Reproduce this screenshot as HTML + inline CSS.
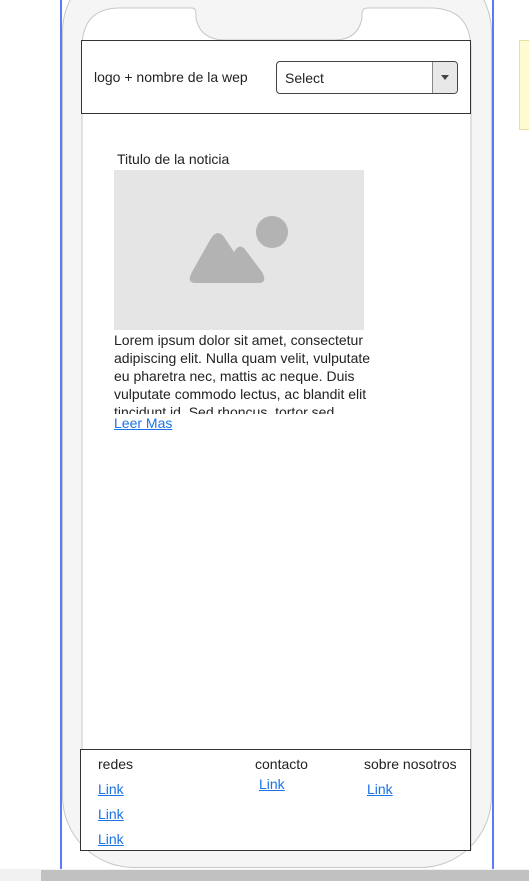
<!DOCTYPE html>
<html><head><style>
*{margin:0;padding:0;box-sizing:border-box}
body{width:529px;height:881px;overflow:hidden;background:#fff;font-family:"Liberation Sans",Arial,sans-serif;position:relative;color:#222}
.a{position:absolute}
a,.lk{color:#1a73e8;text-decoration:underline;font-size:14px}
</style></head><body>
<div class="a" style="left:60px;top:0;width:2px;height:869px;background:#5b7cf0"></div>
<div class="a" style="left:492px;top:0;width:2px;height:869px;background:#5b7cf0"></div>
<div class="a" style="left:62px;top:-40px;width:430px;height:908px;background:#f5f5f5;border:1px solid #c8c8c8;border-radius:72px"></div>
<svg class="a" style="left:0;top:0" width="529" height="881">
<path d="M120 8 H192 Q196 8 196 14 V18 Q200 40 226 40 H334 Q358 40 362 18 V14 Q362 8 368 8 H430 Q471 8 471 50 V850 H82 V48 Q82 8 120 8 Z" fill="#fff" stroke="#c8c8c8" stroke-width="1"/>
<rect x="114" y="170" width="250" height="160" fill="#e5e5e5"/>
<path d="M196 283 Q186 283 192 272 L210 240 Q218 226 226 240 L234 252 Q240 241 247 252 L262 272 Q268 283 258 283 Z" fill="#b3b3b3"/>
<circle cx="272" cy="232" r="16" fill="#b3b3b3"/>
</svg>
<div class="a" style="left:519px;top:40px;width:10px;height:90px;background:#fffbd0;border:1px solid #e8dfa0;border-right:none"></div>
<div class="a" style="left:81px;top:40px;width:390px;height:74px;background:#fff;border:1px solid #333"></div>
<div class="a" style="left:94px;top:69px;font-size:14px">logo + nombre de la wep</div>
<div class="a" style="left:276px;top:61px;width:182px;height:33px;border:1px solid #444;border-radius:4px;background:#fff;overflow:hidden">
<div class="a" style="left:8px;top:8px;font-size:14px">Select</div>
<div class="a" style="right:0;top:0;width:25px;height:31px;background:#e8e8e8;border-left:1px solid #888"></div>
<div class="a" style="right:8px;top:13px;width:0;height:0;border-left:4px solid transparent;border-right:4px solid transparent;border-top:5px solid #444"></div>
</div>
<div class="a" style="left:117px;top:151px;font-size:14px">Titulo de la noticia</div>
<div class="a" style="left:114px;top:331px;width:262px;height:83px;overflow:hidden;font-size:14px;line-height:18px">Lorem ipsum dolor sit amet, consectetur adipiscing elit. Nulla quam velit, vulputate eu pharetra nec, mattis ac neque. Duis vulputate commodo lectus, ac blandit elit tincidunt id. Sed rhoncus, tortor sed</div>
<div class="a lk" style="left:114px;top:415px">Leer Mas</div>
<div class="a" style="left:80px;top:749px;width:391px;height:102px;background:#fff;border:1px solid #333"></div>
<div class="a" style="left:98px;top:756px;font-size:14px">redes</div>
<div class="a" style="left:255px;top:756px;font-size:14px">contacto</div>
<div class="a" style="left:364px;top:756px;font-size:14px">sobre nosotros</div>
<div class="a lk" style="left:98px;top:781px">Link</div>
<div class="a lk" style="left:98px;top:806px">Link</div>
<div class="a lk" style="left:98px;top:831px">Link</div>
<div class="a lk" style="left:259px;top:776px">Link</div>
<div class="a lk" style="left:367px;top:781px">Link</div>
<div class="a" style="left:0;top:869px;width:529px;height:12px;background:#f1f1f1"></div>
<div class="a" style="left:41px;top:870px;width:488px;height:11px;background:#c1c1c1"></div>
</body></html>
